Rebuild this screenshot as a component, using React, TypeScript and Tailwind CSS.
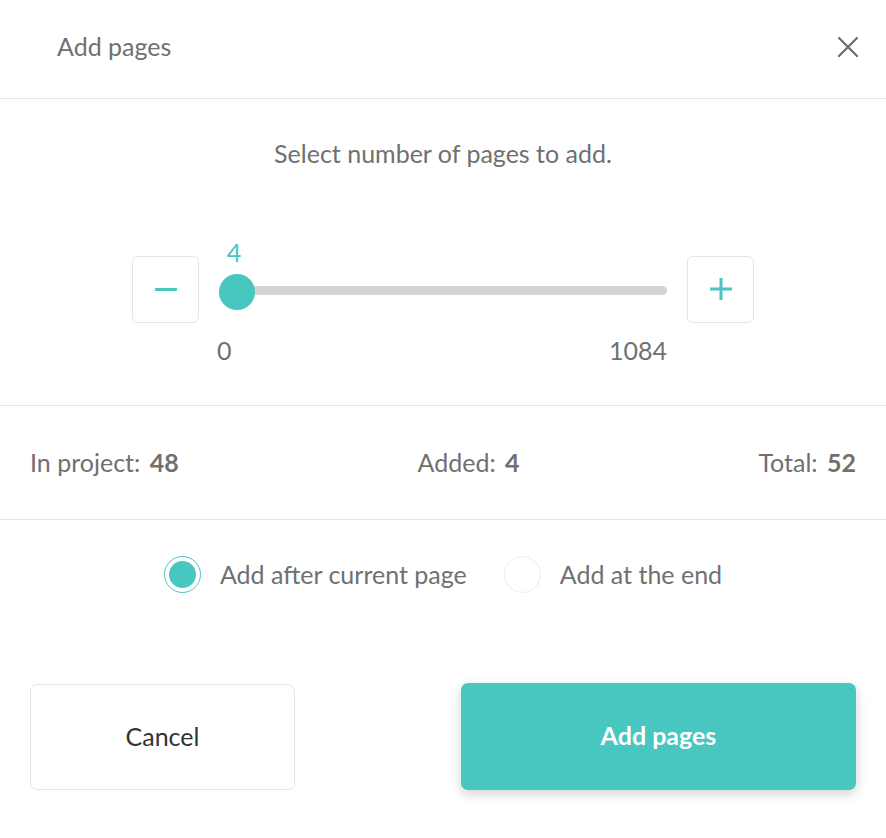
import React from "react";

export default function App() {
  const teal = "#47c7bf";
  return (
    <div className="w-[886px] h-[838px] bg-white text-[#707070]" style={{ fontFamily: "Lato, 'Noto Sans', sans-serif" }}>
      {/* Header */}
      <div className="h-[99px] flex items-center justify-between pl-[57px] pr-[28px] border-b border-[#e5e5e5]">
        <div className="text-[25px] text-[#707070] -mt-[4px]">Add pages</div>
        <svg width="22" height="22" viewBox="0 0 22 22" className="-mt-[4px] mr-[-1px]">
          <path d="M2 2 L20 20 M20 2 L2 20" stroke="#6b6b6b" strokeWidth="2.2" strokeLinecap="round" />
        </svg>
      </div>
      {/* Slider section */}
      <div className="h-[307px] border-b border-[#e5e5e5] flex flex-col items-center">
        <div className="mt-[36px] text-[25px] text-[#707070]">Select number of pages to add.</div>
        <div className="mt-[83px] flex items-start gap-[20px]">
          <div className="w-[67px] h-[67px] rounded-[6px] border border-[#e5e5e5] flex items-center justify-center">
            <div className="w-[22px] h-[3px] bg-[#47c7bf]"></div>
          </div>
          <div className="w-[448px] relative h-[110px]">
            <div className="absolute left-0 right-0 top-[30px] h-[9px] rounded-full bg-[#d3d3d3]"></div>
            <div className="absolute left-0 top-[18px] w-[36px] h-[36px] rounded-full" style={{ backgroundColor: teal }}></div>
            <div className="absolute left-[5px] w-[20px] text-center -top-[22px] text-[25px]" style={{ color: teal }}>4</div>
            <div className="absolute left-[-2px] top-[76px] text-[25px] text-[#707070]">0</div>
            <div className="absolute right-0 top-[76px] text-[25px] text-[#707070]">1084</div>
          </div>
          <div className="w-[67px] h-[67px] rounded-[6px] border border-[#e5e5e5] flex items-center justify-center">
            <svg width="24" height="24" viewBox="0 0 24 24">
              <path d="M12 1 V23 M1 12 H23" stroke={teal} strokeWidth="3" />
            </svg>
          </div>
        </div>
      </div>
      {/* Stats */}
      <div className="h-[114px] border-b border-[#e5e5e5] flex items-center justify-between px-[30px] text-[25px] text-[#707070]">
        <div>In project: <span className="font-bold ml-[3px]">48</span></div>
        <div>Added: <span className="font-bold ml-[3px]">4</span></div>
        <div>Total: <span className="font-bold ml-[3px]">52</span></div>
      </div>
      {/* Radios */}
      <div className="flex justify-center items-center gap-[37px] mt-[36px] text-[25px] text-[#707070]">
        <div className="flex items-center gap-[19px]">
          <div className="w-[37px] h-[37px] rounded-full border flex items-center justify-center" style={{ borderColor: teal }}>
            <div className="w-[27px] h-[27px] rounded-full" style={{ backgroundColor: teal }}></div>
          </div>
          <span>Add after current page</span>
        </div>
        <div className="flex items-center gap-[19px]">
          <div className="w-[37px] h-[37px] rounded-full border border-[#ececec]"></div>
          <span>Add at the end</span>
        </div>
      </div>
      {/* Buttons */}
      <div className="flex justify-between px-[30px] mt-[90px]">
        <div className="w-[265px] h-[106px] rounded-[7px] border border-[#e5e5e5] flex items-center justify-center text-[25px] text-[#333]">Cancel</div>
        <div className="w-[395px] h-[107px] -mt-[1px] rounded-[7px] flex items-center justify-center text-[25px] text-white font-bold shadow-[0_4px_12px_rgba(0,0,0,0.18)]" style={{ backgroundColor: teal }}>Add pages</div>
      </div>
    </div>
  );
}
